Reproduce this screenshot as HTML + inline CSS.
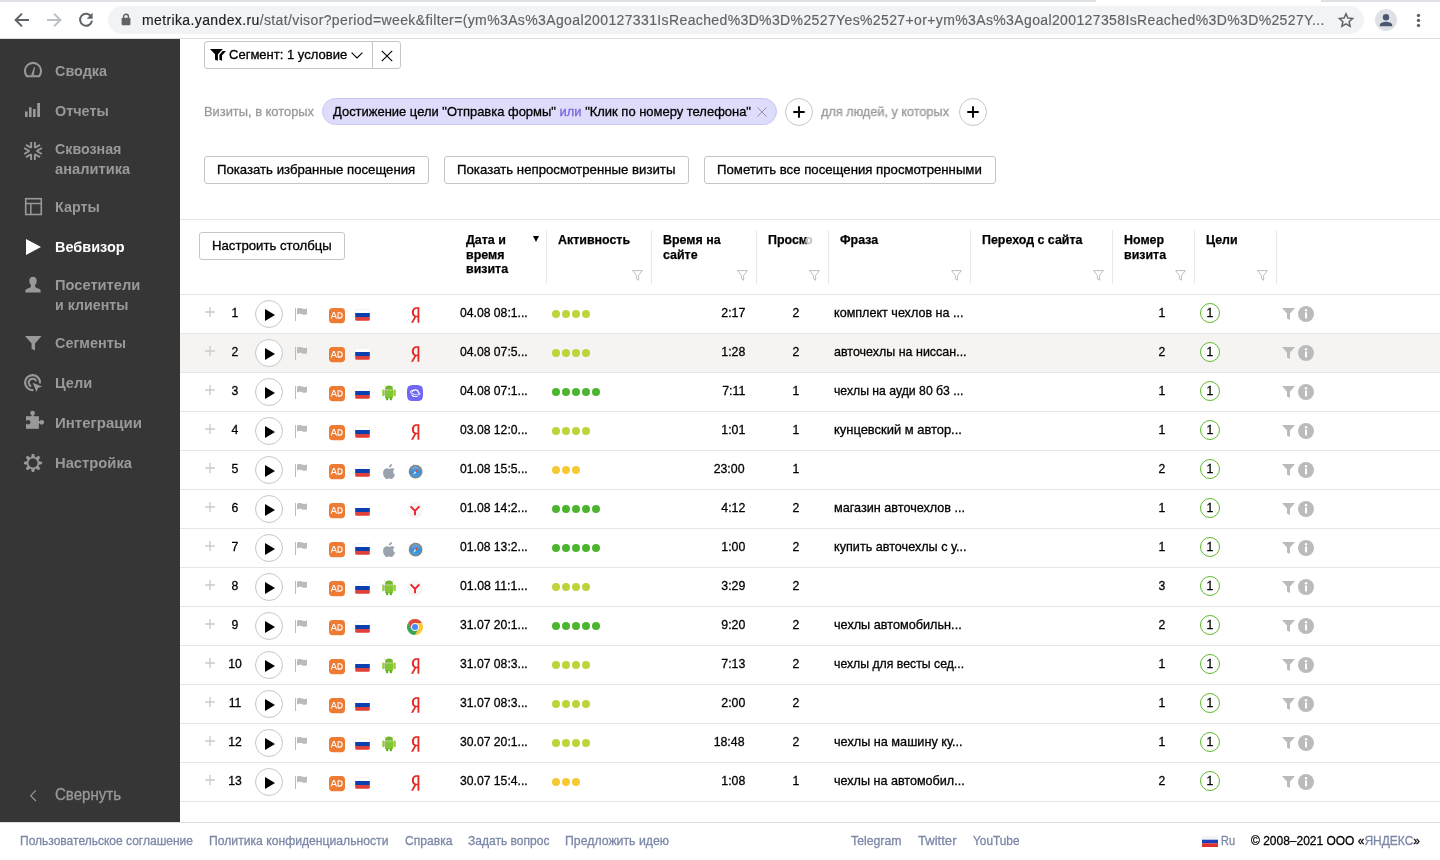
<!DOCTYPE html>
<html lang="ru">
<head>
<meta charset="utf-8">
<title>Вебвизор</title>
<style>
*{box-sizing:border-box;margin:0;padding:0}
html,body{width:1440px;height:860px;overflow:hidden;background:#fff;font-family:"Liberation Sans",sans-serif;color:#000}
svg{position:absolute;overflow:visible}
#wrap{position:absolute;left:0;top:0;width:1440px;height:860px;will-change:transform}
.t{position:absolute;white-space:nowrap;transform-origin:0 50%;-webkit-text-stroke:.3px}
.r{transform-origin:100% 50%}
.m{transform-origin:50% 50%}
#chrome{position:absolute;left:0;top:0;width:1440px;height:39px;background:#fff}
#chromeline{position:absolute;left:0;top:38px;width:1440px;height:1px;background:#dadce0}
#urlbar{position:absolute;left:108px;top:6px;width:1256px;height:28px;border-radius:14px;background:#f1f3f4}
#url{-webkit-text-stroke:.15px;left:142px;top:11px;font-size:14px;line-height:18px;color:#5f6368;letter-spacing:0.375px}
#url b{font-weight:normal;color:#202124}
#side{position:absolute;left:0;top:39px;width:180px;height:783px;background:#363636}
.nav{-webkit-text-stroke:0;font-size:15.5px;line-height:20px;color:#999;font-weight:bold}
.nav.on{color:#fff}
#footer{position:absolute;left:0;top:822px;width:1440px;height:38px;background:#fff;border-top:1px solid #dcdcdc}
.f{font-size:13px;line-height:16px;color:#7b87a6}
.btn{position:absolute;height:28px;border:1px solid #c6c6c6;border-radius:3px;background:#fff}
.bt{font-size:13px;line-height:16px;color:#000}
.line{position:absolute;left:180px;width:1260px;height:1px;background:#e6e6e6}
.th{-webkit-text-stroke:.25px;font-size:13px;line-height:14.5px;font-weight:bold;color:#000;top:233px;white-space:normal}
.sep{position:absolute;top:230px;width:1px;height:54px;background:#e8e8e8}
.hl{position:absolute;left:180px;width:1260px;height:38px;background:#f5f4f2}
.c{font-size:13px;line-height:16px;color:#000}
.dot{position:absolute;width:8px;height:8px;border-radius:4px}
.play{position:absolute;width:28px;height:28px;border-radius:14px;border:1px solid #c6c6c6;background:#fff}
.pc{position:absolute;width:28px;height:28px;border-radius:14px;border:1px solid #c6c6c6;background:#fff}
.goal{position:absolute;width:20px;height:20px;border-radius:10px;border:1.5px solid #5cb82c;background:#fff}
</style>
</head>
<body>
<div id="wrap">
<svg width="0" height="0" style="left:-10px;top:-10px">
<defs>
<symbol id="i-plus" viewBox="0 0 10 10"><path d="M5 0v10M0 5h10" stroke="#ccc" stroke-width="1.4" fill="none"/></symbol>
<symbol id="i-tri" viewBox="0 0 10 12"><path d="M0 0L10 6L0 12z" fill="#000"/></symbol>
<symbol id="i-flag" viewBox="0 0 12 13"><path d="M0.5 0v13" stroke="#bbb" stroke-width="1" fill="none"/><path d="M2 0.6C4 -0.4 5.5 -0.2 7 0.6S10.5 1.2 12 0.2V6.2C10.5 7.2 8.5 6.8 7 6.2S4 5.6 2 6.6z" fill="#bbb"/></symbol>
<symbol id="i-ad" viewBox="0 0 16 16"><rect x="0" y="0.1" width="16" height="15.1" rx="3.6" fill="#ee7b33"/><path d="M2.2 10.6L4.5 4.4h.7l2.3 6.2M3.1 8.5h3.5" stroke="#fff" stroke-width="1.05" fill="none" stroke-linejoin="round"/><path d="M9.1 4.8v5.3h1.4c1.9 0 2.7-1.1 2.7-2.65s-.8-2.65-2.7-2.65z" stroke="#fff" stroke-width="1.05" fill="none"/></symbol>
<symbol id="i-ru" viewBox="0 0 15 12"><rect x="0.25" y="0.25" width="14.5" height="11.5" rx="1.6" fill="#fff" stroke="#e3e3e3" stroke-width=".5"/><path d="M0.2 4h14.6v4H0.2z" fill="#0a3fb0"/><path d="M0.2 8h14.6v2.2a1.6 1.6 0 0 1-1.6 1.6H1.8a1.6 1.6 0 0 1-1.6-1.6z" fill="#e1403a"/></symbol>
<symbol id="i-ya" viewBox="0 0 9 16"><path d="M8.6 16H6.7V10.3H5.2L2.1 16H0l3.5-6.1C1.8 9.2 0.9 7.7 0.9 5.4 0.9 1.9 3 0 5.9 0h2.7zM6.7 1.6H5.8C4.2 1.6 2.9 2.7 2.9 5.3c0 2.5 1.2 3.5 2.8 3.5h1z" fill="#e5251f"/></symbol>
<symbol id="i-android" viewBox="0 0 14 15.6"><path d="M2.3 0.3l1.3 1.5M11.7 0.3l-1.3 1.5" stroke="#a5d36a" stroke-width=".7"/><path d="M3 4.3a4 3.9 0 0 1 8 0z" fill="#74b62b"/><rect x="3" y="4.3" width="8" height=".7" fill="#8aa86a"/><rect x="3" y="5" width="8" height="8.2" rx=".7" fill="#83c634"/><rect x="3.2" y="5" width="7.6" height="1" fill="#9bd648"/><rect x="0.2" y="4.5" width="2.3" height="6.7" rx="1" fill="#97d03c"/><rect x="11.5" y="4.5" width="2.3" height="6.7" rx="1" fill="#97d03c"/><rect x="2.4" y="5" width=".6" height="5.6" fill="#a9b99a"/><rect x="11" y="5" width=".6" height="5.6" fill="#a9b99a"/><rect x="4.1" y="12" width="2.1" height="3.5" rx=".8" fill="#5fae1c"/><rect x="7.8" y="12" width="2.1" height="3.5" rx=".8" fill="#5fae1c"/></symbol>
<symbol id="i-apple" viewBox="0 0 12 15"><path d="M8.9 0c.1 1-.3 1.8-.8 2.4-.6.7-1.4 1.1-2.2 1-.1-.9.3-1.8.8-2.3C7.3.4 8.2.1 8.9 0z" fill="#9aa3ad"/><path d="M11.6 5.2c-.9.6-1.5 1.4-1.5 2.6 0 1.4.8 2.4 1.9 2.8-.3.9-.7 1.7-1.2 2.5-.7 1-1.4 1.9-2.4 1.9-1 0-1.3-.6-2.4-.6s-1.5.6-2.4.6c-1 0-1.7-.9-2.4-2C-.1 11.1-.5 8 .8 6.1c.7-1.1 1.9-1.8 3-1.8s1.8.6 2.7.6c.9 0 1.4-.6 2.7-.6.9 0 1.8.3 2.4.9z" fill="#9aa3ad"/></symbol>
<symbol id="i-samsung" viewBox="0 0 16 16"><path d="M8 0c4.3 0 6 .6 6.9 1.6C15.6 2.6 16 4.2 16 8s-.4 5.4-1.1 6.4C14 15.4 12.3 16 8 16s-6-.6-6.9-1.6C.4 13.4 0 11.8 0 8s.4-5.4 1.1-6.4C2 .6 3.7 0 8 0z" fill="#7067f4"/><g transform="rotate(14 8.1 7.7)"><ellipse cx="8.1" cy="7.7" rx="4.9" ry="1.7" fill="none" stroke="#fff" stroke-width=".9"/></g><circle cx="8.2" cy="8.2" r="3.3" fill="#7067f4" stroke="#fff" stroke-width="1.15"/><g transform="rotate(14 8.1 7.7)"><path d="M3.2 7.7A4.9 1.7 0 0 0 13 7.7" fill="none" stroke="#7067f4" stroke-width="2.3"/><path d="M3.2 7.7A4.9 1.7 0 0 0 13 7.7" fill="none" stroke="#fff" stroke-width=".95" stroke-linecap="round"/></g></symbol>
<linearGradient id="g-saf" x1="0" y1="0" x2="0" y2="1"><stop offset="0" stop-color="#7eaade"/><stop offset=".5" stop-color="#3b8fd9"/><stop offset="1" stop-color="#38a4e8"/></linearGradient><symbol id="i-safari" viewBox="0 0 16 16"><path d="M6.5 1.4l1 1" stroke="#b0b0b0" stroke-width=".9"/><circle cx="8.6" cy="8.7" r="6.15" fill="url(#g-saf)" stroke="#858585" stroke-width="1.5"/><path d="M11.2 5.4L7.9 8 9.3 9.4z" fill="#d9482b"/><path d="M6 12L7.9 8 9.3 9.4z" fill="#e8eef5"/></symbol>
<symbol id="i-ybro" viewBox="0 0 16 16"><circle cx="8" cy="8" r="7.8" fill="#f1f1f1"/><circle cx="8" cy="7.6" r="7" fill="#f7f7f7"/><path d="M3.6 4.3l4.4 4.5 4.4-4.5M8 8.3v5" stroke="#ec2227" stroke-width="1.9" fill="none"/></symbol>
<symbol id="i-chrome" viewBox="0 0 16 16"><circle cx="8" cy="8" r="7.6" fill="#f4f4f4"/><path d="M1.07 4A8 8 0 0 1 14.93 4L8 4A4 4 0 0 0 4.54 10z" fill="#de4b3c"/><path d="M1.07 4A8 8 0 0 1 14.93 4L8 4A4 4 0 0 0 4.54 10z" fill="#fbc935" transform="rotate(120 8 8)"/><path d="M1.07 4A8 8 0 0 1 14.93 4L8 4A4 4 0 0 0 4.54 10z" fill="#3fa45b" transform="rotate(240 8 8)"/><circle cx="8" cy="8" r="3.75" fill="#f4f4f4"/><circle cx="8" cy="8" r="3.05" fill="#4a8af4"/></symbol>
<symbol id="i-funnel" viewBox="0 0 13 12"><path d="M0 0h13L8 5.6V12L5 10.6V5.6z" fill="#bbb"/></symbol>
<symbol id="i-info" viewBox="0 0 16 16"><circle cx="8" cy="8" r="8" fill="#bbb"/><circle cx="8" cy="4.3" r="1.2" fill="#fff"/><rect x="7" y="6.4" width="2" height="6" fill="#fff"/></symbol>
<symbol id="i-filt" viewBox="0 0 11 11"><path d="M0.6 0.6h9.8L6.6 5.4v4.8L4.4 8.8V5.4z" fill="none" stroke="#bdbdbd" stroke-width="1" stroke-linejoin="round"/></symbol>
</defs>
</svg>
<div id="chrome">
<div style="position:absolute;left:0;top:0;width:1440px;height:2px;background:#dee1e6"></div>
<div style="position:absolute;left:1096px;top:0;width:225px;height:2px;background:#fff"></div>
<div id="urlbar"></div>
<div id="chromeline"></div>
<svg style="left:14px;top:12px" width="16" height="16" viewBox="0 0 16 16"><path d="M15 8H2.2M8 1.6L1.6 8 8 14.4" fill="none" stroke="#5f6368" stroke-width="2"/></svg>
<svg style="left:46px;top:12px" width="16" height="16" viewBox="0 0 16 16"><path d="M1 8h12.8M8 1.6L14.4 8 8 14.4" fill="none" stroke="#bcc0c4" stroke-width="2"/></svg>
<svg style="left:78px;top:12px" width="16" height="16" viewBox="0 0 16 16"><path d="M13.2 4.6A6 6 0 1 0 14 8.6" fill="none" stroke="#5f6368" stroke-width="2"/><path d="M14.6 0.8v6h-6z" fill="#5f6368"/></svg>
<svg style="left:121px;top:13px" width="10" height="13" viewBox="0 0 10 13"><rect x="0.6" y="4.8" width="8.8" height="7.4" rx="1" fill="#5f6368"/><path d="M2.6 5V3.6a2.4 2.4 0 0 1 4.8 0V5" fill="none" stroke="#5f6368" stroke-width="1.4"/></svg>
<svg style="left:1338px;top:12px" width="16" height="16" viewBox="0 0 16 16"><path d="M8 1.8l1.9 4.3 4.7.5-3.5 3.1 1 4.6L8 11.9l-4.1 2.4 1-4.6L1.4 6.6l4.7-.5z" fill="none" stroke="#5f6368" stroke-width="1.5" stroke-linejoin="miter"/></svg>
<svg style="left:1375px;top:9px" width="22" height="22" viewBox="0 0 22 22"><circle cx="11" cy="11" r="11" fill="#dfe1e6"/><circle cx="11" cy="8.2" r="3.2" fill="#4c5870"/><path d="M4.8 17.2v-1.4c0-2.1 4.1-3.1 6.2-3.1s6.2 1 6.2 3.1v1.4z" fill="#4c5870"/></svg>
<svg style="left:1416px;top:13px" width="5" height="15" viewBox="0 0 5 15"><circle cx="2.5" cy="2.4" r="1.7" fill="#5f6368"/><circle cx="2.5" cy="7.4" r="1.7" fill="#5f6368"/><circle cx="2.5" cy="12.4" r="1.7" fill="#5f6368"/></svg>
<div class="t" id="url"><b>metrika.yandex.ru</b>/stat/visor?period=week&amp;filter=(ym%3As%3Agoal200127331IsReached%3D%3D%2527Yes%2527+or+ym%3As%3Agoal200127358IsReached%3D%3D%2527Y...</div>
</div>
<div id="side"></div>
<div class="t nav" id="n0" style="left:55px;top:60.7px;transform:scaleX(0.9286);">Сводка</div>
<div class="t nav" id="n1" style="left:55px;top:100.7px;transform:scaleX(0.9293);">Отчеты</div>
<div class="t nav" id="n2" style="left:55px;top:138.7px;transform:scaleX(0.9186);">Сквозная</div>
<div class="t nav" id="n3" style="left:55px;top:158.7px;transform:scaleX(0.9461);">аналитика</div>
<div class="t nav" id="n4" style="left:55px;top:196.7px;transform:scaleX(0.9261);">Карты</div>
<div class="t nav on" id="n5" style="left:55px;top:236.7px;transform:scaleX(0.9342);">Вебвизор</div>
<div class="t nav" id="n6" style="left:55px;top:274.7px;transform:scaleX(0.945);">Посетители</div>
<div class="t nav" id="n7" style="left:55px;top:294.7px;transform:scaleX(0.9166);">и клиенты</div>
<div class="t nav" id="n8" style="left:55px;top:332.7px;transform:scaleX(0.9275);">Сегменты</div>
<div class="t nav" id="n9" style="left:55px;top:372.7px;transform:scaleX(0.9414);">Цели</div>
<div class="t nav" id="n10" style="left:55px;top:412.7px;transform:scaleX(0.9682);">Интеграции</div>
<div class="t nav" id="n11" style="left:55px;top:452.7px;transform:scaleX(0.9521);">Настройка</div>
<div class="t nav" id="ncol" style="left:55px;top:785.4px;transform:scaleX(0.9405);font-weight:normal;font-size:16px;-webkit-text-stroke:.3px">Свернуть</div>
<svg style="left:23px;top:61px" width="20" height="17" viewBox="0 0 20 17"><path d="M3.9 15.25A8.07 8.07 0 1 1 16.1 15.25z" fill="none" stroke="#999" stroke-width="2.05" stroke-linejoin="miter"/><path d="M8 14.6h2.7l1.3-8.3-.9-.3z" fill="#999"/></svg>
<svg style="left:25px;top:103px" width="16" height="14" viewBox="0 0 16 14"><path d="M0 8.4h2.6V14H0zM4 4.2h2.6V14H4zM8 6h2.6v8H8zM12.2 0H15v14h-2.8z" fill="#999"/></svg>
<svg style="left:23px;top:141px" width="20" height="20" viewBox="0 0 20 20"><path d="M18.81 7.05L13.7 10L18.81 12.95M11.85 0.9L11.85 6.8L16.96 3.85M3.04 3.85L8.15 6.8L8.15 0.9M1.19 12.95L6.3 10L1.19 7.05M8.15 19.1L8.15 13.2L3.04 16.15M16.96 16.15L11.85 13.2L11.85 19.1" fill="none" stroke="#999" stroke-width="1.85" stroke-linejoin="bevel"/></svg>
<svg style="left:24px;top:197px" width="19" height="19" viewBox="0 0 19 19"><rect x="1.7" y="1.7" width="15.6" height="15.8" fill="none" stroke="#999" stroke-width="1.6"/><path d="M1.7 6.4h15.6M6.8 6.4v11" stroke="#999" stroke-width="1.5" fill="none"/></svg>
<svg style="left:26px;top:239px" width="15" height="16" viewBox="0 0 15 16"><path d="M0 0l15 8L0 16z" fill="#fff"/></svg>
<svg style="left:24px;top:276px" width="18" height="17" viewBox="0 0 18 17"><path d="M9 .8c2.2 0 3.7 1.6 3.7 3.9 0 1.7-.7 3.3-1.6 4.2v1.4c0 .7.5 1.2 1.3 1.5l2.9 1.1c.9.4 1.3 1 1.3 1.9v1.8H1.4v-1.8c0-.9.4-1.5 1.3-1.9l2.9-1.1c.8-.3 1.3-.8 1.3-1.5V8.9C6 8 5.3 6.4 5.3 4.7 5.3 2.4 6.800.8 9 .8z" fill="#999"/></svg>
<svg style="left:25px;top:336px" width="17" height="15" viewBox="0 0 17 15"><path d="M0 0h16.6L10 7.6V14.6L6.6 12.8V7.6z" fill="#999"/></svg>
<svg style="left:23px;top:373px" width="20" height="20" viewBox="0 0 20 20"><path d="M17 10.4A7.5 7.5 0 1 0 10.4 17" fill="none" stroke="#999" stroke-width="2.2"/><path d="M13.2 8.1A3.9 3.9 0 1 0 8.1 13.2" fill="none" stroke="#999" stroke-width="2.1"/><path d="M9.7 9.7l9.4 3.8-4 1.6-1.6 4z" fill="#999" stroke="#363636" stroke-width="1.3" paint-order="stroke"/></svg>
<svg style="left:25px;top:410px" width="20" height="20" viewBox="0 0 20 20"><path d="M1 6.2h12.9v12.6H1z" fill="#999"/><circle cx="7.6" cy="3.1" r="2.4" fill="#999"/><rect x="6.6" y="3" width="2" height="4" fill="#999"/><circle cx="16.7" cy="12.3" r="2.4" fill="#999"/><rect x="13" y="11.3" width="3.5" height="2" fill="#999"/><circle cx="3.1" cy="12.3" r="2.3" fill="#363636"/><rect x="0" y="11.2" width="2.5" height="2.2" fill="#363636"/></svg>
<svg style="left:23px;top:453px" width="20" height="20" viewBox="0 0 20 20"><circle cx="10" cy="10" r="5.35" fill="none" stroke="#999" stroke-width="1.3"/><path transform="rotate(0 10 10)" d="M7.7 5.2L8.9 0.9h2.2L12.3 5.2z" fill="#999"/><path transform="rotate(45 10 10)" d="M7.7 5.2L8.9 0.9h2.2L12.3 5.2z" fill="#999"/><path transform="rotate(90 10 10)" d="M7.7 5.2L8.9 0.9h2.2L12.3 5.2z" fill="#999"/><path transform="rotate(135 10 10)" d="M7.7 5.2L8.9 0.9h2.2L12.3 5.2z" fill="#999"/><path transform="rotate(180 10 10)" d="M7.7 5.2L8.9 0.9h2.2L12.3 5.2z" fill="#999"/><path transform="rotate(225 10 10)" d="M7.7 5.2L8.9 0.9h2.2L12.3 5.2z" fill="#999"/><path transform="rotate(270 10 10)" d="M7.7 5.2L8.9 0.9h2.2L12.3 5.2z" fill="#999"/><path transform="rotate(315 10 10)" d="M7.7 5.2L8.9 0.9h2.2L12.3 5.2z" fill="#999"/></svg>
<svg style="left:29px;top:789px" width="8" height="13" viewBox="0 0 8 13"><path d="M6.9 1.4L1.7 6.7 6.9 12" fill="none" stroke="#999" stroke-width="1.2"/></svg>
<div class="btn" style="left:204px;top:41px;width:197px"></div>
<div style="position:absolute;left:372px;top:42px;width:1px;height:26px;background:#c6c6c6"></div>
<svg style="left:210px;top:49px" width="16" height="12" viewBox="0 0 16 12"><path d="M0 .1h12.9L7.9 5.2v6.5L5 10.7V5.2z" fill="#000"/><path d="M12.7 2.1h3.2L12 6.4v5.3l-2.6-1V5.7z" fill="#000"/></svg>
<div class="t bt" id="segtxt" style="left:229px;top:47px;transform:scaleX(1.0021);">Сегмент: 1 условие</div>
<svg style="left:351px;top:52px" width="12" height="7" viewBox="0 0 12 7"><path d="M.6.6l5.4 5.4 5.4-5.4" fill="none" stroke="#000" stroke-width="1.1"/></svg>
<svg style="left:381px;top:50px" width="12" height="12" viewBox="0 0 12 12"><path d="M.8.8l10.4 10.4M11.200.8L.8 11.2" fill="none" stroke="#000" stroke-width="1.1"/></svg>
<div class="t c" id="vis" style="left:204px;top:103.5px;transform:scaleX(0.9902);color:#999">Визиты, в которых</div>
<div style="position:absolute;left:322px;top:98px;width:455px;height:27px;border-radius:13.5px;background:#dddcfb;border:1px solid #c8c6f3"></div>
<div class="t c" id="chip" style="left:333px;top:103.5px;transform:scaleX(0.9968);">Достижение цели "Отправка формы" <span style="color:#7868d8">или</span> "Клик по номеру телефона"</div>
<svg style="left:757px;top:107px" width="10" height="10" viewBox="0 0 10 10"><path d="M.400.4l9.2 9.2M9.600.4L.4 9.6" fill="none" stroke="#8a8aa8" stroke-width=".9"/></svg>
<div class="pc" style="left:785px;top:98px"></div>
<svg style="left:793px;top:105.7px" width="12" height="12" viewBox="0 0 12 12"><path d="M6 1v10M1 6h10" stroke="#000" stroke-width="1.9" stroke-linecap="round" fill="none"/></svg>
<div class="pc" style="left:959px;top:98px"></div>
<svg style="left:967px;top:105.7px" width="12" height="12" viewBox="0 0 12 12"><path d="M6 1v10M1 6h10" stroke="#000" stroke-width="1.9" stroke-linecap="round" fill="none"/></svg>
<div class="t c" id="ppl" style="left:821px;top:103.5px;transform:scaleX(0.9757);color:#999">для людей, у которых</div>
<div class="btn" style="left:204px;top:156px;width:225px"></div>
<div class="t bt" id="b1" style="left:217.3px;top:162px;transform:scaleX(1.0129);">Показать избранные посещения</div>
<div class="btn" style="left:444px;top:156px;width:245px"></div>
<div class="t bt" id="b2" style="left:457.3px;top:162px;transform:scaleX(1.0167);">Показать непросмотренные визиты</div>
<div class="btn" style="left:704px;top:156px;width:291.5px"></div>
<div class="t bt" id="b3" style="left:717.3px;top:162px;transform:scaleX(1.0144);">Пометить все посещения просмотренными</div>
<div class="line" style="top:219px"></div>
<div class="line" style="top:294px"></div>
<div class="btn" style="left:199px;top:232px;width:146px"></div>
<div class="t bt" id="b4" style="left:212.3px;top:238px;transform:scaleX(1.0134);">Настроить столбцы</div>
<div class="t th" id="h1_0" style="left:466px;top:233px;transform:scaleX(.955);transform-origin:0 0">Дата и</div>
<div class="t th" id="h1_1" style="left:466px;top:247.5px;transform:scaleX(.955);transform-origin:0 0">время</div>
<div class="t th" id="h1_2" style="left:466px;top:262px;transform:scaleX(.955);transform-origin:0 0">визита</div>
<div class="t th" id="h2_0" style="left:558px;top:233px;transform:scaleX(.955);transform-origin:0 0">Активность</div>
<div class="t th" id="h3_0" style="left:663px;top:233px;transform:scaleX(.955);transform-origin:0 0">Время на</div>
<div class="t th" id="h3_1" style="left:663px;top:247.5px;transform:scaleX(.955);transform-origin:0 0">сайте</div>
<div class="t th" id="h4_0" style="left:768px;top:233px;transform:scaleX(.955);transform-origin:0 0">Просм</div>
<div class="t th" id="h5_0" style="left:840px;top:233px;transform:scaleX(.955);transform-origin:0 0">Фраза</div>
<div class="t th" id="h6_0" style="left:982px;top:233px;transform:scaleX(.955);transform-origin:0 0">Переход с сайта</div>
<div class="t th" id="h7_0" style="left:1124px;top:233px;transform:scaleX(.955);transform-origin:0 0">Номер</div>
<div class="t th" id="h7_1" style="left:1124px;top:247.5px;transform:scaleX(.955);transform-origin:0 0">визита</div>
<div class="t th" id="h8_0" style="left:1206px;top:233px;transform:scaleX(.955);transform-origin:0 0">Цели</div>
<div class="t th" style="left:804.5px;color:#c4c4c4;transform:scaleX(.955);transform-origin:0 0">о</div>
<svg style="left:533px;top:236px" width="6" height="6" viewBox="0 0 6 6"><path d="M0 0h6L3 6z" fill="#000"/></svg>
<div class="sep" style="left:546px"></div>
<div class="sep" style="left:651px"></div>
<div class="sep" style="left:756px"></div>
<div class="sep" style="left:828px"></div>
<div class="sep" style="left:970px"></div>
<div class="sep" style="left:1112px"></div>
<div class="sep" style="left:1194px"></div>
<div class="sep" style="left:1276px"></div>
<svg style="left:632px;top:270px" width="11" height="11" ><use href="#i-filt"/></svg>
<svg style="left:737px;top:270px" width="11" height="11" ><use href="#i-filt"/></svg>
<svg style="left:809px;top:270px" width="11" height="11" ><use href="#i-filt"/></svg>
<svg style="left:951px;top:270px" width="11" height="11" ><use href="#i-filt"/></svg>
<svg style="left:1093px;top:270px" width="11" height="11" ><use href="#i-filt"/></svg>
<svg style="left:1175px;top:270px" width="11" height="11" ><use href="#i-filt"/></svg>
<svg style="left:1257px;top:270px" width="11" height="11" ><use href="#i-filt"/></svg>
<div class="hl" style="top:334px"></div>
<div class="line" style="top:333px"></div>
<svg style="left:205px;top:307px" width="10" height="10" ><use href="#i-plus"/></svg>
<div class="t c m" id="t22" style="left:185px;width:100px;text-align:center;top:304.5px;transform:scaleX(.94);">1</div>
<div class="play" style="left:255px;top:300px"></div>
<svg style="left:265px;top:309px" width="10" height="12" ><use href="#i-tri"/></svg>
<svg style="left:295px;top:308px" width="12" height="13" ><use href="#i-flag"/></svg>
<svg style="left:329px;top:308px" width="16" height="16" ><use href="#i-ad"/></svg>
<svg style="left:355.45px;top:308.9px" width="15" height="12" ><use href="#i-ru"/></svg>
<svg style="left:410.5px;top:306.9px" width="8.8" height="16" ><use href="#i-ya"/></svg>
<div class="t c d" id="t23" style="left:460.3px;top:304.5px;transform:scaleX(0.9366);">04.08 08:1...</div>
<div class="dot" style="left:552px;top:310px;background:#bfd33a"></div>
<div class="dot" style="left:562px;top:310px;background:#bfd33a"></div>
<div class="dot" style="left:572px;top:310px;background:#bfd33a"></div>
<div class="dot" style="left:582px;top:310px;background:#bfd33a"></div>
<div class="t c r" id="t24" style="right:695px;top:304.5px;transform:scaleX(.95);">2:17</div>
<div class="t c m" id="t25" style="left:745.6px;width:100px;text-align:center;top:304.5px;transform:scaleX(.94);">2</div>
<div class="t c p" id="t26" style="left:834.4px;top:304.5px;transform:scaleX(0.9678);">комплект чехлов на ...</div>
<div class="t c r" id="t27" style="right:275px;top:304.5px;transform:scaleX(.94);">1</div>
<div class="goal" style="left:1200px;top:303px"></div>
<div class="t c m" id="t28" style="left:1160px;width:100px;text-align:center;top:304.5px;transform:scaleX(.94);">1</div>
<svg style="left:1282px;top:308px" width="13" height="12" ><use href="#i-funnel"/></svg>
<svg style="left:1298px;top:305.9px" width="16" height="16" ><use href="#i-info"/></svg>
<div class="line" style="top:372px"></div>
<svg style="left:205px;top:346px" width="10" height="10" ><use href="#i-plus"/></svg>
<div class="t c m" id="t29" style="left:185px;width:100px;text-align:center;top:343.5px;transform:scaleX(.94);">2</div>
<div class="play" style="left:255px;top:339px"></div>
<svg style="left:265px;top:348px" width="10" height="12" ><use href="#i-tri"/></svg>
<svg style="left:295px;top:347px" width="12" height="13" ><use href="#i-flag"/></svg>
<svg style="left:329px;top:347px" width="16" height="16" ><use href="#i-ad"/></svg>
<svg style="left:355.45px;top:347.9px" width="15" height="12" ><use href="#i-ru"/></svg>
<svg style="left:410.5px;top:345.9px" width="8.8" height="16" ><use href="#i-ya"/></svg>
<div class="t c d" id="t30" style="left:460.3px;top:343.5px;transform:scaleX(0.9366);">04.08 07:5...</div>
<div class="dot" style="left:552px;top:349px;background:#bfd33a"></div>
<div class="dot" style="left:562px;top:349px;background:#bfd33a"></div>
<div class="dot" style="left:572px;top:349px;background:#bfd33a"></div>
<div class="dot" style="left:582px;top:349px;background:#bfd33a"></div>
<div class="t c r" id="t31" style="right:695px;top:343.5px;transform:scaleX(.95);">1:28</div>
<div class="t c m" id="t32" style="left:745.6px;width:100px;text-align:center;top:343.5px;transform:scaleX(.94);">2</div>
<div class="t c p" id="t33" style="left:834.4px;top:343.5px;transform:scaleX(0.9603);">авточехлы на ниссан...</div>
<div class="t c r" id="t34" style="right:275px;top:343.5px;transform:scaleX(.94);">2</div>
<div class="goal" style="left:1200px;top:342px"></div>
<div class="t c m" id="t35" style="left:1160px;width:100px;text-align:center;top:343.5px;transform:scaleX(.94);">1</div>
<svg style="left:1282px;top:347px" width="13" height="12" ><use href="#i-funnel"/></svg>
<svg style="left:1298px;top:344.9px" width="16" height="16" ><use href="#i-info"/></svg>
<div class="line" style="top:411px"></div>
<svg style="left:205px;top:385px" width="10" height="10" ><use href="#i-plus"/></svg>
<div class="t c m" id="t36" style="left:185px;width:100px;text-align:center;top:382.5px;transform:scaleX(.94);">3</div>
<div class="play" style="left:255px;top:378px"></div>
<svg style="left:265px;top:387px" width="10" height="12" ><use href="#i-tri"/></svg>
<svg style="left:295px;top:386px" width="12" height="13" ><use href="#i-flag"/></svg>
<svg style="left:329px;top:386px" width="16" height="16" ><use href="#i-ad"/></svg>
<svg style="left:355.45px;top:386.9px" width="15" height="12" ><use href="#i-ru"/></svg>
<svg style="left:382px;top:384.8px" width="14" height="15.6" ><use href="#i-android"/></svg>
<svg style="left:407px;top:385px" width="16" height="16" ><use href="#i-samsung"/></svg>
<div class="t c d" id="t37" style="left:460.3px;top:382.5px;transform:scaleX(0.9366);">04.08 07:1...</div>
<div class="dot" style="left:552px;top:388px;background:#4cb52f"></div>
<div class="dot" style="left:562px;top:388px;background:#4cb52f"></div>
<div class="dot" style="left:572px;top:388px;background:#4cb52f"></div>
<div class="dot" style="left:582px;top:388px;background:#4cb52f"></div>
<div class="dot" style="left:592px;top:388px;background:#4cb52f"></div>
<div class="t c r" id="t38" style="right:695px;top:382.5px;transform:scaleX(.95);">7:11</div>
<div class="t c m" id="t39" style="left:745.6px;width:100px;text-align:center;top:382.5px;transform:scaleX(.94);">1</div>
<div class="t c p" id="t40" style="left:834.4px;top:382.5px;transform:scaleX(0.9412);">чехлы на ауди 80 б3 ...</div>
<div class="t c r" id="t41" style="right:275px;top:382.5px;transform:scaleX(.94);">1</div>
<div class="goal" style="left:1200px;top:381px"></div>
<div class="t c m" id="t42" style="left:1160px;width:100px;text-align:center;top:382.5px;transform:scaleX(.94);">1</div>
<svg style="left:1282px;top:386px" width="13" height="12" ><use href="#i-funnel"/></svg>
<svg style="left:1298px;top:383.9px" width="16" height="16" ><use href="#i-info"/></svg>
<div class="line" style="top:450px"></div>
<svg style="left:205px;top:424px" width="10" height="10" ><use href="#i-plus"/></svg>
<div class="t c m" id="t43" style="left:185px;width:100px;text-align:center;top:421.5px;transform:scaleX(.94);">4</div>
<div class="play" style="left:255px;top:417px"></div>
<svg style="left:265px;top:426px" width="10" height="12" ><use href="#i-tri"/></svg>
<svg style="left:295px;top:425px" width="12" height="13" ><use href="#i-flag"/></svg>
<svg style="left:329px;top:425px" width="16" height="16" ><use href="#i-ad"/></svg>
<svg style="left:355.45px;top:425.9px" width="15" height="12" ><use href="#i-ru"/></svg>
<svg style="left:410.5px;top:423.9px" width="8.8" height="16" ><use href="#i-ya"/></svg>
<div class="t c d" id="t44" style="left:460.3px;top:421.5px;transform:scaleX(0.9366);">03.08 12:0...</div>
<div class="dot" style="left:552px;top:427px;background:#bfd33a"></div>
<div class="dot" style="left:562px;top:427px;background:#bfd33a"></div>
<div class="dot" style="left:572px;top:427px;background:#bfd33a"></div>
<div class="dot" style="left:582px;top:427px;background:#bfd33a"></div>
<div class="t c r" id="t45" style="right:695px;top:421.5px;transform:scaleX(.95);">1:01</div>
<div class="t c m" id="t46" style="left:745.6px;width:100px;text-align:center;top:421.5px;transform:scaleX(.94);">1</div>
<div class="t c p" id="t47" style="left:834.4px;top:421.5px;transform:scaleX(0.9942);">кунцевский м автор...</div>
<div class="t c r" id="t48" style="right:275px;top:421.5px;transform:scaleX(.94);">1</div>
<div class="goal" style="left:1200px;top:420px"></div>
<div class="t c m" id="t49" style="left:1160px;width:100px;text-align:center;top:421.5px;transform:scaleX(.94);">1</div>
<svg style="left:1282px;top:425px" width="13" height="12" ><use href="#i-funnel"/></svg>
<svg style="left:1298px;top:422.9px" width="16" height="16" ><use href="#i-info"/></svg>
<div class="line" style="top:489px"></div>
<svg style="left:205px;top:463px" width="10" height="10" ><use href="#i-plus"/></svg>
<div class="t c m" id="t50" style="left:185px;width:100px;text-align:center;top:460.5px;transform:scaleX(.94);">5</div>
<div class="play" style="left:255px;top:456px"></div>
<svg style="left:265px;top:465px" width="10" height="12" ><use href="#i-tri"/></svg>
<svg style="left:295px;top:464px" width="12" height="13" ><use href="#i-flag"/></svg>
<svg style="left:329px;top:464px" width="16" height="16" ><use href="#i-ad"/></svg>
<svg style="left:355.45px;top:464.9px" width="15" height="12" ><use href="#i-ru"/></svg>
<svg style="left:382.8px;top:464px" width="12.2" height="15" ><use href="#i-apple"/></svg>
<svg style="left:407px;top:463.4px" width="16" height="16" ><use href="#i-safari"/></svg>
<div class="t c d" id="t51" style="left:460.3px;top:460.5px;transform:scaleX(0.9366);">01.08 15:5...</div>
<div class="dot" style="left:552px;top:466px;background:#f7c934"></div>
<div class="dot" style="left:562px;top:466px;background:#f7c934"></div>
<div class="dot" style="left:572px;top:466px;background:#f7c934"></div>
<div class="t c r" id="t52" style="right:695px;top:460.5px;transform:scaleX(.95);">23:00</div>
<div class="t c m" id="t53" style="left:745.6px;width:100px;text-align:center;top:460.5px;transform:scaleX(.94);">1</div>
<div class="t c r" id="t54" style="right:275px;top:460.5px;transform:scaleX(.94);">2</div>
<div class="goal" style="left:1200px;top:459px"></div>
<div class="t c m" id="t55" style="left:1160px;width:100px;text-align:center;top:460.5px;transform:scaleX(.94);">1</div>
<svg style="left:1282px;top:464px" width="13" height="12" ><use href="#i-funnel"/></svg>
<svg style="left:1298px;top:461.9px" width="16" height="16" ><use href="#i-info"/></svg>
<div class="line" style="top:528px"></div>
<svg style="left:205px;top:502px" width="10" height="10" ><use href="#i-plus"/></svg>
<div class="t c m" id="t56" style="left:185px;width:100px;text-align:center;top:499.5px;transform:scaleX(.94);">6</div>
<div class="play" style="left:255px;top:495px"></div>
<svg style="left:265px;top:504px" width="10" height="12" ><use href="#i-tri"/></svg>
<svg style="left:295px;top:503px" width="12" height="13" ><use href="#i-flag"/></svg>
<svg style="left:329px;top:503px" width="16" height="16" ><use href="#i-ad"/></svg>
<svg style="left:355.45px;top:503.9px" width="15" height="12" ><use href="#i-ru"/></svg>
<svg style="left:407px;top:502px" width="16" height="16" ><use href="#i-ybro"/></svg>
<div class="t c d" id="t57" style="left:460.3px;top:499.5px;transform:scaleX(0.9366);">01.08 14:2...</div>
<div class="dot" style="left:552px;top:505px;background:#4cb52f"></div>
<div class="dot" style="left:562px;top:505px;background:#4cb52f"></div>
<div class="dot" style="left:572px;top:505px;background:#4cb52f"></div>
<div class="dot" style="left:582px;top:505px;background:#4cb52f"></div>
<div class="dot" style="left:592px;top:505px;background:#4cb52f"></div>
<div class="t c r" id="t58" style="right:695px;top:499.5px;transform:scaleX(.95);">4:12</div>
<div class="t c m" id="t59" style="left:745.6px;width:100px;text-align:center;top:499.5px;transform:scaleX(.94);">2</div>
<div class="t c p" id="t60" style="left:834.4px;top:499.5px;transform:scaleX(0.9721);">магазин авточехлов ...</div>
<div class="t c r" id="t61" style="right:275px;top:499.5px;transform:scaleX(.94);">1</div>
<div class="goal" style="left:1200px;top:498px"></div>
<div class="t c m" id="t62" style="left:1160px;width:100px;text-align:center;top:499.5px;transform:scaleX(.94);">1</div>
<svg style="left:1282px;top:503px" width="13" height="12" ><use href="#i-funnel"/></svg>
<svg style="left:1298px;top:500.9px" width="16" height="16" ><use href="#i-info"/></svg>
<div class="line" style="top:567px"></div>
<svg style="left:205px;top:541px" width="10" height="10" ><use href="#i-plus"/></svg>
<div class="t c m" id="t63" style="left:185px;width:100px;text-align:center;top:538.5px;transform:scaleX(.94);">7</div>
<div class="play" style="left:255px;top:534px"></div>
<svg style="left:265px;top:543px" width="10" height="12" ><use href="#i-tri"/></svg>
<svg style="left:295px;top:542px" width="12" height="13" ><use href="#i-flag"/></svg>
<svg style="left:329px;top:542px" width="16" height="16" ><use href="#i-ad"/></svg>
<svg style="left:355.45px;top:542.9px" width="15" height="12" ><use href="#i-ru"/></svg>
<svg style="left:382.8px;top:542px" width="12.2" height="15" ><use href="#i-apple"/></svg>
<svg style="left:407px;top:541.4px" width="16" height="16" ><use href="#i-safari"/></svg>
<div class="t c d" id="t64" style="left:460.3px;top:538.5px;transform:scaleX(0.9366);">01.08 13:2...</div>
<div class="dot" style="left:552px;top:544px;background:#4cb52f"></div>
<div class="dot" style="left:562px;top:544px;background:#4cb52f"></div>
<div class="dot" style="left:572px;top:544px;background:#4cb52f"></div>
<div class="dot" style="left:582px;top:544px;background:#4cb52f"></div>
<div class="dot" style="left:592px;top:544px;background:#4cb52f"></div>
<div class="t c r" id="t65" style="right:695px;top:538.5px;transform:scaleX(.95);">1:00</div>
<div class="t c m" id="t66" style="left:745.6px;width:100px;text-align:center;top:538.5px;transform:scaleX(.94);">2</div>
<div class="t c p" id="t67" style="left:834.4px;top:538.5px;transform:scaleX(0.9715);">купить авточехлы с у...</div>
<div class="t c r" id="t68" style="right:275px;top:538.5px;transform:scaleX(.94);">1</div>
<div class="goal" style="left:1200px;top:537px"></div>
<div class="t c m" id="t69" style="left:1160px;width:100px;text-align:center;top:538.5px;transform:scaleX(.94);">1</div>
<svg style="left:1282px;top:542px" width="13" height="12" ><use href="#i-funnel"/></svg>
<svg style="left:1298px;top:539.9px" width="16" height="16" ><use href="#i-info"/></svg>
<div class="line" style="top:606px"></div>
<svg style="left:205px;top:580px" width="10" height="10" ><use href="#i-plus"/></svg>
<div class="t c m" id="t70" style="left:185px;width:100px;text-align:center;top:577.5px;transform:scaleX(.94);">8</div>
<div class="play" style="left:255px;top:573px"></div>
<svg style="left:265px;top:582px" width="10" height="12" ><use href="#i-tri"/></svg>
<svg style="left:295px;top:581px" width="12" height="13" ><use href="#i-flag"/></svg>
<svg style="left:329px;top:581px" width="16" height="16" ><use href="#i-ad"/></svg>
<svg style="left:355.45px;top:581.9px" width="15" height="12" ><use href="#i-ru"/></svg>
<svg style="left:382px;top:579.8px" width="14" height="15.6" ><use href="#i-android"/></svg>
<svg style="left:407px;top:580px" width="16" height="16" ><use href="#i-ybro"/></svg>
<div class="t c d" id="t71" style="left:460.3px;top:577.5px;transform:scaleX(0.9491);">01.08 11:1...</div>
<div class="dot" style="left:552px;top:583px;background:#bfd33a"></div>
<div class="dot" style="left:562px;top:583px;background:#bfd33a"></div>
<div class="dot" style="left:572px;top:583px;background:#bfd33a"></div>
<div class="dot" style="left:582px;top:583px;background:#bfd33a"></div>
<div class="t c r" id="t72" style="right:695px;top:577.5px;transform:scaleX(.95);">3:29</div>
<div class="t c m" id="t73" style="left:745.6px;width:100px;text-align:center;top:577.5px;transform:scaleX(.94);">2</div>
<div class="t c r" id="t74" style="right:275px;top:577.5px;transform:scaleX(.94);">3</div>
<div class="goal" style="left:1200px;top:576px"></div>
<div class="t c m" id="t75" style="left:1160px;width:100px;text-align:center;top:577.5px;transform:scaleX(.94);">1</div>
<svg style="left:1282px;top:581px" width="13" height="12" ><use href="#i-funnel"/></svg>
<svg style="left:1298px;top:578.9px" width="16" height="16" ><use href="#i-info"/></svg>
<div class="line" style="top:645px"></div>
<svg style="left:205px;top:619px" width="10" height="10" ><use href="#i-plus"/></svg>
<div class="t c m" id="t76" style="left:185px;width:100px;text-align:center;top:616.5px;transform:scaleX(.94);">9</div>
<div class="play" style="left:255px;top:612px"></div>
<svg style="left:265px;top:621px" width="10" height="12" ><use href="#i-tri"/></svg>
<svg style="left:295px;top:620px" width="12" height="13" ><use href="#i-flag"/></svg>
<svg style="left:329px;top:620px" width="16" height="16" ><use href="#i-ad"/></svg>
<svg style="left:355.45px;top:620.9px" width="15" height="12" ><use href="#i-ru"/></svg>
<svg style="left:407px;top:619px" width="16" height="16" ><use href="#i-chrome"/></svg>
<div class="t c d" id="t77" style="left:460.3px;top:616.5px;transform:scaleX(0.9366);">31.07 20:1...</div>
<div class="dot" style="left:552px;top:622px;background:#4cb52f"></div>
<div class="dot" style="left:562px;top:622px;background:#4cb52f"></div>
<div class="dot" style="left:572px;top:622px;background:#4cb52f"></div>
<div class="dot" style="left:582px;top:622px;background:#4cb52f"></div>
<div class="dot" style="left:592px;top:622px;background:#4cb52f"></div>
<div class="t c r" id="t78" style="right:695px;top:616.5px;transform:scaleX(.95);">9:20</div>
<div class="t c m" id="t79" style="left:745.6px;width:100px;text-align:center;top:616.5px;transform:scaleX(.94);">2</div>
<div class="t c p" id="t80" style="left:834.4px;top:616.5px;transform:scaleX(0.9755);">чехлы автомобильн...</div>
<div class="t c r" id="t81" style="right:275px;top:616.5px;transform:scaleX(.94);">2</div>
<div class="goal" style="left:1200px;top:615px"></div>
<div class="t c m" id="t82" style="left:1160px;width:100px;text-align:center;top:616.5px;transform:scaleX(.94);">1</div>
<svg style="left:1282px;top:620px" width="13" height="12" ><use href="#i-funnel"/></svg>
<svg style="left:1298px;top:617.9px" width="16" height="16" ><use href="#i-info"/></svg>
<div class="line" style="top:684px"></div>
<svg style="left:205px;top:658px" width="10" height="10" ><use href="#i-plus"/></svg>
<div class="t c m" id="t83" style="left:185px;width:100px;text-align:center;top:655.5px;transform:scaleX(.94);">10</div>
<div class="play" style="left:255px;top:651px"></div>
<svg style="left:265px;top:660px" width="10" height="12" ><use href="#i-tri"/></svg>
<svg style="left:295px;top:659px" width="12" height="13" ><use href="#i-flag"/></svg>
<svg style="left:329px;top:659px" width="16" height="16" ><use href="#i-ad"/></svg>
<svg style="left:355.45px;top:659.9px" width="15" height="12" ><use href="#i-ru"/></svg>
<svg style="left:382px;top:657.8px" width="14" height="15.6" ><use href="#i-android"/></svg>
<svg style="left:410.5px;top:657.9px" width="8.8" height="16" ><use href="#i-ya"/></svg>
<div class="t c d" id="t84" style="left:460.3px;top:655.5px;transform:scaleX(0.9366);">31.07 08:3...</div>
<div class="dot" style="left:552px;top:661px;background:#bfd33a"></div>
<div class="dot" style="left:562px;top:661px;background:#bfd33a"></div>
<div class="dot" style="left:572px;top:661px;background:#bfd33a"></div>
<div class="dot" style="left:582px;top:661px;background:#bfd33a"></div>
<div class="t c r" id="t85" style="right:695px;top:655.5px;transform:scaleX(.95);">7:13</div>
<div class="t c m" id="t86" style="left:745.6px;width:100px;text-align:center;top:655.5px;transform:scaleX(.94);">2</div>
<div class="t c p" id="t87" style="left:834.4px;top:655.5px;transform:scaleX(0.9437);">чехлы для весты сед...</div>
<div class="t c r" id="t88" style="right:275px;top:655.5px;transform:scaleX(.94);">1</div>
<div class="goal" style="left:1200px;top:654px"></div>
<div class="t c m" id="t89" style="left:1160px;width:100px;text-align:center;top:655.5px;transform:scaleX(.94);">1</div>
<svg style="left:1282px;top:659px" width="13" height="12" ><use href="#i-funnel"/></svg>
<svg style="left:1298px;top:656.9px" width="16" height="16" ><use href="#i-info"/></svg>
<div class="line" style="top:723px"></div>
<svg style="left:205px;top:697px" width="10" height="10" ><use href="#i-plus"/></svg>
<div class="t c m" id="t90" style="left:185px;width:100px;text-align:center;top:694.5px;transform:scaleX(.94);">11</div>
<div class="play" style="left:255px;top:690px"></div>
<svg style="left:265px;top:699px" width="10" height="12" ><use href="#i-tri"/></svg>
<svg style="left:295px;top:698px" width="12" height="13" ><use href="#i-flag"/></svg>
<svg style="left:329px;top:698px" width="16" height="16" ><use href="#i-ad"/></svg>
<svg style="left:355.45px;top:698.9px" width="15" height="12" ><use href="#i-ru"/></svg>
<svg style="left:410.5px;top:696.9px" width="8.8" height="16" ><use href="#i-ya"/></svg>
<div class="t c d" id="t91" style="left:460.3px;top:694.5px;transform:scaleX(0.9366);">31.07 08:3...</div>
<div class="dot" style="left:552px;top:700px;background:#bfd33a"></div>
<div class="dot" style="left:562px;top:700px;background:#bfd33a"></div>
<div class="dot" style="left:572px;top:700px;background:#bfd33a"></div>
<div class="dot" style="left:582px;top:700px;background:#bfd33a"></div>
<div class="t c r" id="t92" style="right:695px;top:694.5px;transform:scaleX(.95);">2:00</div>
<div class="t c m" id="t93" style="left:745.6px;width:100px;text-align:center;top:694.5px;transform:scaleX(.94);">2</div>
<div class="t c r" id="t94" style="right:275px;top:694.5px;transform:scaleX(.94);">1</div>
<div class="goal" style="left:1200px;top:693px"></div>
<div class="t c m" id="t95" style="left:1160px;width:100px;text-align:center;top:694.5px;transform:scaleX(.94);">1</div>
<svg style="left:1282px;top:698px" width="13" height="12" ><use href="#i-funnel"/></svg>
<svg style="left:1298px;top:695.9px" width="16" height="16" ><use href="#i-info"/></svg>
<div class="line" style="top:762px"></div>
<svg style="left:205px;top:736px" width="10" height="10" ><use href="#i-plus"/></svg>
<div class="t c m" id="t96" style="left:185px;width:100px;text-align:center;top:733.5px;transform:scaleX(.94);">12</div>
<div class="play" style="left:255px;top:729px"></div>
<svg style="left:265px;top:738px" width="10" height="12" ><use href="#i-tri"/></svg>
<svg style="left:295px;top:737px" width="12" height="13" ><use href="#i-flag"/></svg>
<svg style="left:329px;top:737px" width="16" height="16" ><use href="#i-ad"/></svg>
<svg style="left:355.45px;top:737.9px" width="15" height="12" ><use href="#i-ru"/></svg>
<svg style="left:382px;top:735.8px" width="14" height="15.6" ><use href="#i-android"/></svg>
<svg style="left:410.5px;top:735.9px" width="8.8" height="16" ><use href="#i-ya"/></svg>
<div class="t c d" id="t97" style="left:460.3px;top:733.5px;transform:scaleX(0.9366);">30.07 20:1...</div>
<div class="dot" style="left:552px;top:739px;background:#bfd33a"></div>
<div class="dot" style="left:562px;top:739px;background:#bfd33a"></div>
<div class="dot" style="left:572px;top:739px;background:#bfd33a"></div>
<div class="dot" style="left:582px;top:739px;background:#bfd33a"></div>
<div class="t c r" id="t98" style="right:695px;top:733.5px;transform:scaleX(.95);">18:48</div>
<div class="t c m" id="t99" style="left:745.6px;width:100px;text-align:center;top:733.5px;transform:scaleX(.94);">2</div>
<div class="t c p" id="t100" style="left:834.4px;top:733.5px;transform:scaleX(0.9757);">чехлы на машину ку...</div>
<div class="t c r" id="t101" style="right:275px;top:733.5px;transform:scaleX(.94);">1</div>
<div class="goal" style="left:1200px;top:732px"></div>
<div class="t c m" id="t102" style="left:1160px;width:100px;text-align:center;top:733.5px;transform:scaleX(.94);">1</div>
<svg style="left:1282px;top:737px" width="13" height="12" ><use href="#i-funnel"/></svg>
<svg style="left:1298px;top:734.9px" width="16" height="16" ><use href="#i-info"/></svg>
<div class="line" style="top:801px"></div>
<svg style="left:205px;top:775px" width="10" height="10" ><use href="#i-plus"/></svg>
<div class="t c m" id="t103" style="left:185px;width:100px;text-align:center;top:772.5px;transform:scaleX(.94);">13</div>
<div class="play" style="left:255px;top:768px"></div>
<svg style="left:265px;top:777px" width="10" height="12" ><use href="#i-tri"/></svg>
<svg style="left:295px;top:776px" width="12" height="13" ><use href="#i-flag"/></svg>
<svg style="left:329px;top:776px" width="16" height="16" ><use href="#i-ad"/></svg>
<svg style="left:355.45px;top:776.9px" width="15" height="12" ><use href="#i-ru"/></svg>
<svg style="left:410.5px;top:774.9px" width="8.8" height="16" ><use href="#i-ya"/></svg>
<div class="t c d" id="t104" style="left:460.3px;top:772.5px;transform:scaleX(0.9366);">30.07 15:4...</div>
<div class="dot" style="left:552px;top:778px;background:#f7c934"></div>
<div class="dot" style="left:562px;top:778px;background:#f7c934"></div>
<div class="dot" style="left:572px;top:778px;background:#f7c934"></div>
<div class="t c r" id="t105" style="right:695px;top:772.5px;transform:scaleX(.95);">1:08</div>
<div class="t c m" id="t106" style="left:745.6px;width:100px;text-align:center;top:772.5px;transform:scaleX(.94);">1</div>
<div class="t c p" id="t107" style="left:834.4px;top:772.5px;transform:scaleX(0.9684);">чехлы на автомобил...</div>
<div class="t c r" id="t108" style="right:275px;top:772.5px;transform:scaleX(.94);">2</div>
<div class="goal" style="left:1200px;top:771px"></div>
<div class="t c m" id="t109" style="left:1160px;width:100px;text-align:center;top:772.5px;transform:scaleX(.94);">1</div>
<svg style="left:1282px;top:776px" width="13" height="12" ><use href="#i-funnel"/></svg>
<svg style="left:1298px;top:773.9px" width="16" height="16" ><use href="#i-info"/></svg>
<div id="footer"></div>
<div class="t f" id="f0" style="left:20px;top:833px;transform:scaleX(0.9239);">Пользовательское соглашение</div>
<div class="t f" id="f1" style="left:209px;top:833px;transform:scaleX(0.9359);">Политика конфиденциальности</div>
<div class="t f" id="f2" style="left:405px;top:833px;transform:scaleX(0.9314);">Справка</div>
<div class="t f" id="f3" style="left:468px;top:833px;transform:scaleX(0.9266);">Задать вопрос</div>
<div class="t f" id="f4" style="left:565px;top:833px;transform:scaleX(0.9451);">Предложить идею</div>
<div class="t f" id="f5" style="left:851px;top:833px;transform:scaleX(0.9445);">Telegram</div>
<div class="t f" id="f6" style="left:918px;top:833px;transform:scaleX(1.0053);">Twitter</div>
<div class="t f" id="f7" style="left:973px;top:833px;transform:scaleX(0.9101);">YouTube</div>
<div class="t f" id="f8" style="left:1221px;top:833px;transform:scaleX(0.8421);">Ru</div>
<div class="t f" id="fc" style="left:1251px;top:833px;transform:scaleX(0.9216);color:#000">© 2008–2021 ООО «<span style="color:#7b87a6">ЯНДЕКС</span>»</div>
<svg style="left:1202px;top:836px" width="16" height="11" viewBox="0 0 16 11"><rect x="0" y="0" width="16" height="11" fill="#fff"/><rect x="0" y="0" width="16" height="3.7" fill="#f4f4f4"/><rect x="0" y="3.7" width="16" height="3.7" fill="#1f3fb8"/><rect x="0" y="7.3" width="16" height="3.7" fill="#e03030"/></svg>
</div>
</body>
</html>
